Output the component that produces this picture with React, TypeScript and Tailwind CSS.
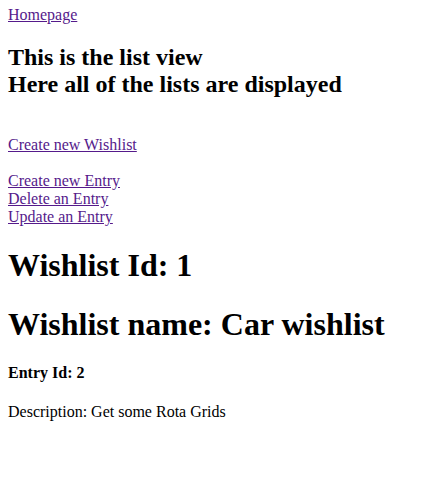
export default function App() {
  const link = "text-[#551a8b] underline";
  return (
    <div className="px-2 pt-1.5 pb-2 font-['Liberation_Serif',serif] text-base leading-[normal] text-black bg-white min-h-[488px]">
      <a href="#" className={link}>Homepage</a>
      <h2 className="text-[1.5em] font-bold my-[0.83em]">
        This is the list view
        <br />
        Here all of the lists are displayed
      </h2>
      <br />
      <a href="#" className={link}>Create new Wishlist</a>
      <br />
      <br />
      <a href="#" className={link}>Create new Entry</a>
      <br />
      <a href="#" className={link}>Delete an Entry</a>
      <br />
      <a href="#" className={link}>Update an Entry</a>
      <h1 className="text-[2em] font-bold my-[0.67em]">Wishlist Id: 1</h1>
      <h1 className="text-[2em] font-bold my-[0.67em]">Wishlist name: Car wishlist</h1>
      <h4 className="font-bold my-[1.33em]">Entry Id: 2</h4>
      <p className="my-4">Description: Get some Rota Grids</p>
    </div>
  );
}
